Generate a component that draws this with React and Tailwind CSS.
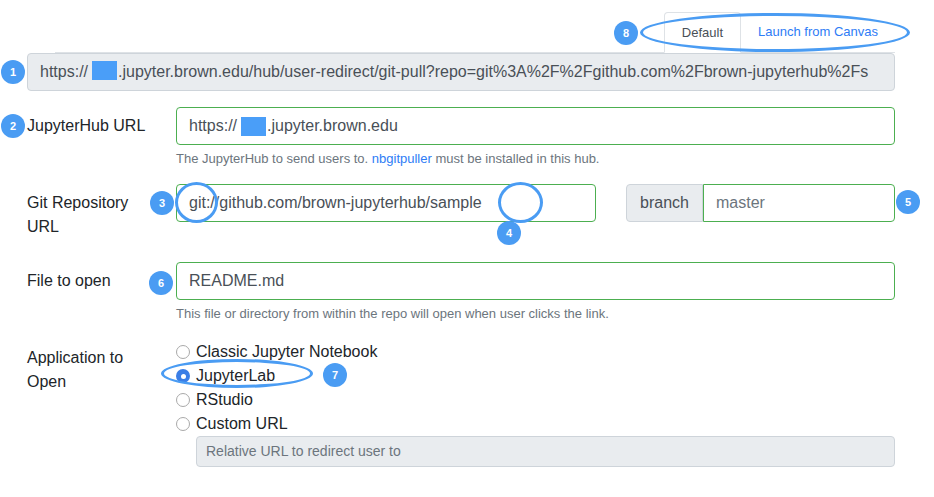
import React from 'react';

const Badge = ({ n, className }) => (
  <div className={`absolute w-[24px] h-[24px] rounded-full bg-[#4a9cf3] text-white text-[11px] font-bold flex items-center justify-center ${className}`}>
    {n}
  </div>
);

const Ring = ({ className }) => (
  <div className={`absolute rounded-[50%] border-[3px] border-[#4a9cf3] ${className}`}></div>
);

const Redact = () => (
  <span className="inline-block ml-[4px] mr-[1px] w-[25px] h-[19px] bg-[#4a9ef8] align-[-3px]"></span>
);

const Radio = ({ label, checked }) => (
  <label className="flex items-center h-6">
    {checked ? (
      <span className="w-[14px] h-[14px] rounded-full bg-[#3b7ee6] flex items-center justify-center mr-[6px]">
        <span className="w-[5px] h-[5px] rounded-full bg-white"></span>
      </span>
    ) : (
      <span className="w-[14px] h-[14px] rounded-full border border-[#a9a9a9] bg-white mr-[6px]"></span>
    )}
    <span className="text-[16px] text-[#212529]">{label}</span>
  </label>
);

export default function App() {
  return (
    <div className="relative w-[934px] h-[497px] bg-white font-['Liberation_Sans',Arial,sans-serif] overflow-hidden">
      <div className="pl-[27px] w-[895px] pt-[12px]">
        {/* tabs */}
        <div className="ml-[28px] flex justify-end border-b border-[#dee2e6]">
          <div className="h-[41px] px-[17px] border border-[#dee2e6] border-b-white bg-white rounded-t -mb-px flex items-center text-[13px] text-[#495057]">
            Default
          </div>
          <div className="h-[40px] px-[17px] flex items-center text-[13px] text-[#2e7cf6]">
            Launch from Canvas
          </div>
        </div>

        {/* generated link */}
        <div className="h-[38px] rounded border border-[#ced4da] bg-[#e9ecef] px-3 flex items-center text-[16px] text-[#495057]">
          <div className="whitespace-nowrap flex-1">
            https://<Redact />.jupyter.brown.edu/hub/user-redirect/git-pull?repo=git%3A%2F%2Fgithub.com%2Fbrown-jupyterhub%2Fs
          </div>
        </div>

        {/* JupyterHub URL */}
        <div className="flex mt-4">
          <div className="w-[149px] pt-[7px] leading-6 text-[16px] text-[#212529]">JupyterHub URL</div>
          <div className="flex-1">
            <div className="h-[38px] rounded border border-[#4caf50] px-3 flex items-center text-[16px] text-[#495057] whitespace-nowrap">
              https://<Redact />.jupyter.brown.edu
            </div>
            <div className="mt-1 text-[13px] leading-[19px] text-[#6c757d]">
              The JupyterHub to send users to. <span className="text-[#2e7cf6]">nbgitpuller</span> must be installed in this hub.
            </div>
          </div>
        </div>

        {/* Git repo */}
        <div className="flex mt-4">
          <div className="w-[149px] py-[7px] leading-6 text-[16px] text-[#212529]">Git Repository<br />URL</div>
          <div className="flex-1 flex">
            <div className="w-[420px] h-[38px] rounded border border-[#4caf50] px-3 flex items-center text-[16px] text-[#495057] whitespace-nowrap">
              git://github.com/brown-jupyterhub/sample
            </div>
            <div className="ml-[30px] flex-1 flex h-[38px]">
              <div className="w-[77px] rounded-l border border-[#ced4da] bg-[#e9ecef] flex items-center justify-center text-[16px] text-[#495057]">
                branch
              </div>
              <div className="flex-1 rounded-r border border-[#4caf50] px-3 flex items-center text-[16px] text-[#6c757d]">
                master
              </div>
            </div>
          </div>
        </div>

        {/* File to open */}
        <div className="flex mt-4">
          <div className="w-[149px] pt-[7px] leading-6 text-[16px] text-[#212529]">File to open</div>
          <div className="flex-1">
            <div className="h-[38px] rounded border border-[#4caf50] px-3 flex items-center text-[16px] text-[#495057]">
              README.md
            </div>
            <div className="mt-1 text-[13px] leading-[19px] text-[#6c757d]">
              This file or directory from within the repo will open when user clicks the link.
            </div>
          </div>
        </div>

        {/* Application */}
        <div className="flex mt-4">
          <div className="w-[149px] pt-[7px] leading-6 text-[16px] text-[#212529]">Application to<br />Open</div>
          <div className="flex-1 pt-[1px]">
            <Radio label="Classic Jupyter Notebook" />
            <Radio label="JupyterLab" checked />
            <Radio label="RStudio" />
            <Radio label="Custom URL" />
            <div className="ml-[20px] h-[31px] rounded border border-[#ced4da] bg-[#e9ecef] px-[9px] flex items-center text-[14px] text-[#6c757d]">
              Relative URL to redirect user to
            </div>
          </div>
        </div>
      </div>

      {/* annotations */}
      <Ring className="left-[640px] top-[13px] w-[270px] h-[39px]" />
      <Ring className="left-[175px] top-[182px] w-[43px] h-[41px]" />
      <Ring className="left-[498px] top-[182px] w-[45px] h-[41px]" />
      <Ring className="left-[161px] top-[359px] w-[152px] h-[29px]" />

      <Badge n="1" className="left-[1px] top-[60px]" />
      <Badge n="2" className="left-[1px] top-[114px]" />
      <Badge n="3" className="left-[150px] top-[191px]" />
      <Badge n="4" className="left-[497px] top-[221px]" />
      <Badge n="5" className="left-[896px] top-[190px]" />
      <Badge n="6" className="left-[149px] top-[271px]" />
      <Badge n="7" className="left-[323px] top-[363px]" />
      <Badge n="8" className="left-[614px] top-[21px]" />
    </div>
  );
}
